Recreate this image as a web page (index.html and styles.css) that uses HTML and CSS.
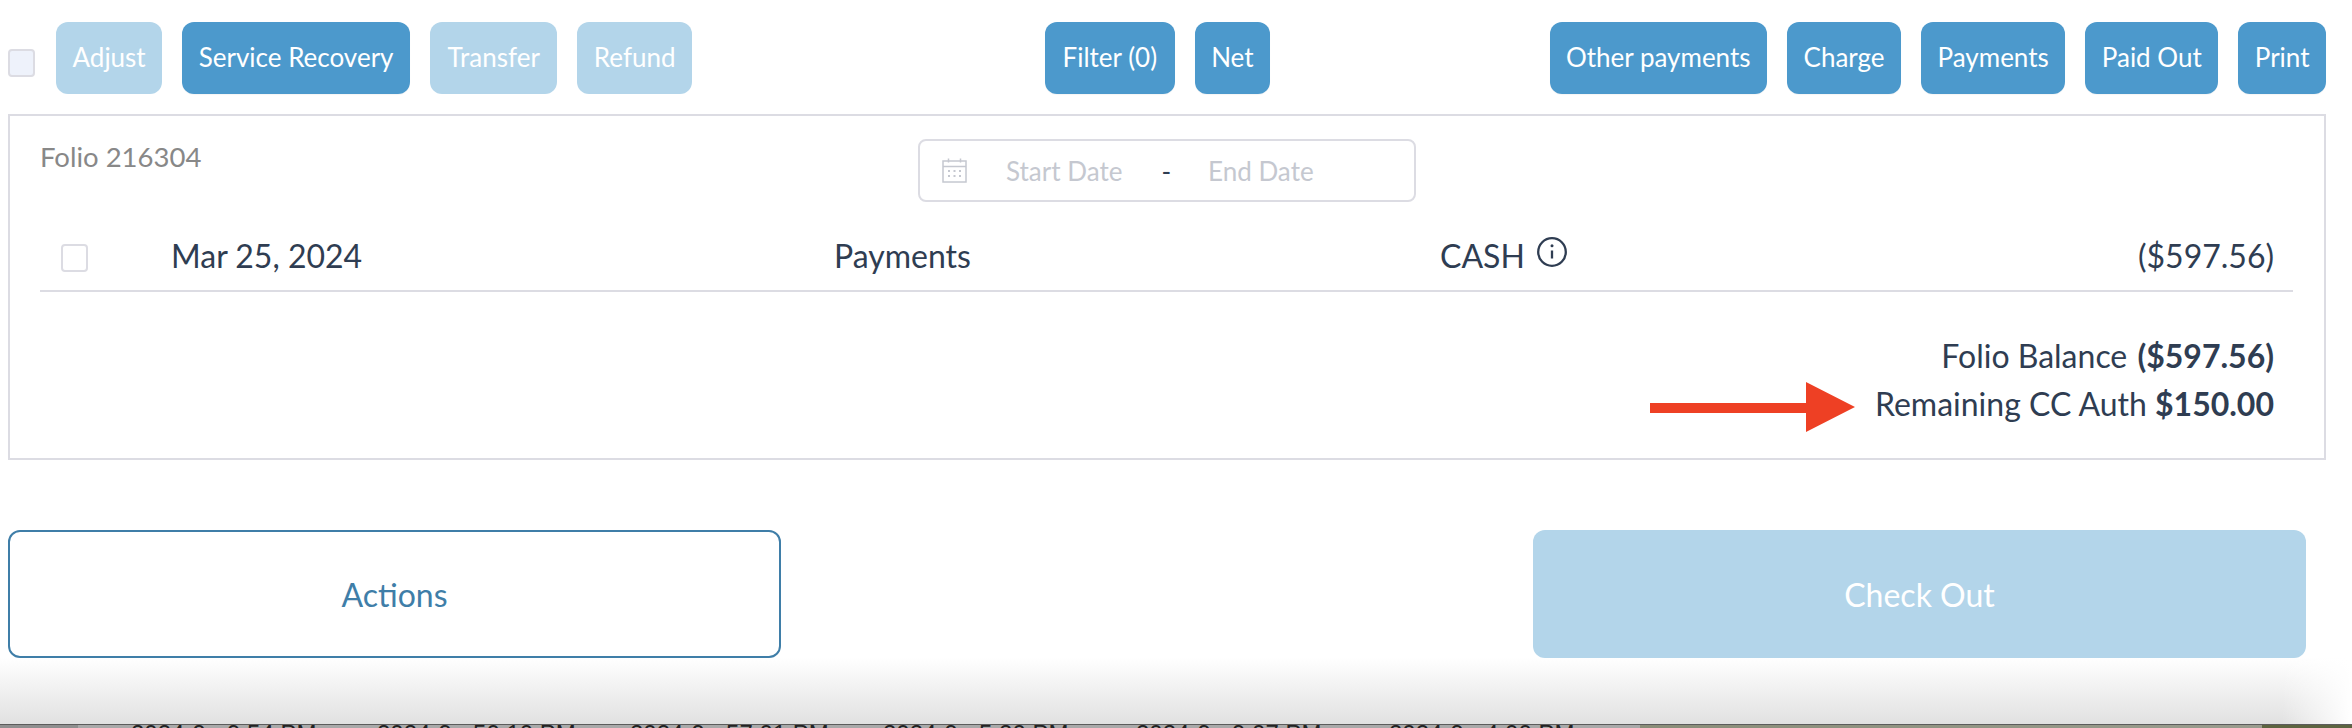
FILE: index.html
```html
<!DOCTYPE html>
<html lang="en">
<head>
<meta charset="utf-8">
<title>Folio</title>
<link rel="stylesheet" href="styles.css">
</head>
<body>
<div class="page">
  <div class="toolbar">
    <div class="group">
      <span class="check check-tinted"></span>
      <button class="btn btn-off">Adjust</button>
      <button class="btn">Service Recovery</button>
      <button class="btn btn-off btn-wide">Transfer</button>
      <button class="btn btn-off">Refund</button>
    </div>
    <div class="group group-center">
      <button class="btn btn-wide">Filter (0)</button>
      <button class="btn">Net</button>
    </div>
    <div class="group group-right">
      <button class="btn">Other payments</button>
      <button class="btn">Charge</button>
      <button class="btn">Payments</button>
      <button class="btn">Paid Out</button>
      <button class="btn">Print</button>
    </div>
  </div>

  <section class="panel">
    <div class="panel-head">
      <div class="folio">Folio 216304</div>
      <div class="dates">
        <svg class="cal" viewBox="0 0 25 25" fill="none" stroke="#c5c8d0" stroke-width="1.5">
          <rect x="1" y="3" width="23" height="21"/>
          <path d="M1 8.5h23M6.5 0.5v4M18.5 0.5v4"/>
          <path d="M6 13h2M11.5 13h2M17 13h2M6 18h2M11.5 18h2M17 18h2" stroke-width="2"/>
        </svg>
        <span class="date-ph date-start">Start Date</span>
        <span class="date-dash">-</span>
        <span class="date-ph">End Date</span>
      </div>
    </div>
    <div class="row">
      <span class="row-check"><span class="check"></span></span>
      <span>Mar 25, 2024</span>
      <span>Payments</span>
      <span class="cash">CASH
        <svg class="info" viewBox="0 0 30 30" fill="none" stroke="#2f3d52">
          <circle cx="15" cy="15" r="13.8" stroke-width="2.3"/>
          <path d="M15 13.5v8" stroke-width="2.3"/>
          <circle cx="15" cy="8.8" r="1.5" fill="#2f3d52" stroke="none"/>
        </svg>
      </span>
      <span class="amount">($597.56)</span>
    </div>
    <div class="summary">
      <div class="sum-line">Folio Balance <b class="sum-gap">($597.56)</b></div>
      <div class="sum-line">Remaining CC Auth <b>$150.00</b></div>
    </div>
    <svg class="arrow" viewBox="0 0 205 50"><path d="M0 21h156V0l49 25-49 25V31H0z" fill="#ee4024"/></svg>
  </section>

  <div class="actions">
    <button class="big big-outline">Actions</button>
    <button class="big big-off">Check Out</button>
  </div>
</div>

<div class="fade"></div>
<div class="strip">
  <span class="stamp">2024-9-&nbsp;&nbsp;9:54 PM</span>
  <span class="stamp">2024-9-&nbsp;&nbsp;50:10 PM</span>
  <span class="stamp">2024-9-&nbsp;&nbsp;57:01 PM</span>
  <span class="stamp">2024-9-&nbsp;&nbsp;5:20 PM</span>
  <span class="stamp">2024-9-&nbsp;&nbsp;9:07 PM</span>
  <span class="stamp">2024-9-&nbsp;&nbsp;4:00 PM</span>
</div>
</body>
</html>
```
FILE: styles.css
```css
* { box-sizing: border-box; }
html, body { margin: 0; height: 728px; overflow: hidden; background: #fff; }
body { display: flex; flex-direction: column; font-family: Lato, "Liberation Sans", sans-serif; color: #2f3d52; }

.page { height: 658px; padding: 22px 26px 0 8px; flex: none; }

.toolbar { display: flex; align-items: center; height: 72px; }
.group { display: flex; align-items: center; gap: 20px; }
.group-center { margin-left: 353px; }
.group-right { margin-left: auto; }

.btn {
  height: 72px;
  padding: 0 16.5px 3px;
  border: 0;
  border-radius: 12px;
  background: #4c99cc;
  color: #fff;
  font: 400 26px Lato, sans-serif;
  box-shadow: 0 1px 1px rgba(0, 0, 0, 0.04);
}
.btn-off { background: #b3d5ea; box-shadow: none; }
.btn-wide { padding-left: 17.5px; padding-right: 17.5px; }

.check {
  display: block;
  width: 27px;
  height: 28px;
  border: 2px solid #dcdce3;
  border-radius: 4px;
  background: #fff;
}
.check-tinted { background: #eef2fb; margin-top: 9px; margin-right: 1px; }

.panel {
  position: relative;
  height: 346px;
  margin-top: 20px;
  padding: 23px 31px 0 30px;
  border: 2px solid #dcdce3;
}
.panel-head { display: flex; align-items: flex-start; height: 63px; }
.folio { width: 878px; font-size: 27.5px; line-height: 28px; margin-top: 4px; color: #888; }
.dates {
  display: flex;
  align-items: center;
  width: 498px;
  height: 63px;
  padding-left: 22px;
  border: 2px solid #dcdce3;
  border-radius: 8px;
  font-size: 26px;
}
.cal { width: 25px; height: 25px; flex: none; }
.date-ph { color: #c5c8d0; }
.date-start { margin-left: 39px; }
.date-dash { margin: 0 37px 0 39px; color: #2f3d52; }

.row {
  display: grid;
  grid-template-columns: 131px 663px 606px 200px 1fr;
  align-items: center;
  height: 90px;
  padding-top: 19px;
  padding-right: 19px;
  border-bottom: 2px solid #dcdce3;
  font-size: 32px;
}
.row-check { padding-left: 21px; padding-top: 4px; }
.cash { display: flex; align-items: center; gap: 12px; }
.info { width: 30px; height: 30px; margin-top: -7px; }
.amount { text-align: right; }

.summary { padding: 40px 19px 0 0; text-align: right; font-size: 32px; }
.sum-line { line-height: 48px; }
.sum-gap { margin-left: 2px; }
.summary b { font-weight: 700; }

.arrow { position: absolute; left: 1640px; top: 266px; width: 205px; height: 50px; }

.actions { display: flex; justify-content: space-between; margin-top: 70px; padding-right: 20px; }
.big {
  width: 773px;
  height: 128px;
  border-radius: 12px;
  font: 400 32px Lato, sans-serif;
}
.big-outline { background: #fff; border: 2px solid #3f7ea8; color: #3f7ea8; }
.big-off { background: #b3d5ea; border: 0; color: #fff; }

.fade {
  flex: none;
  height: 66px;
  background:
    linear-gradient(to left, #fff, rgba(255, 255, 255, 0) 70px),
    linear-gradient(to bottom, #fff, #e1e1e1);
}
.strip {
  flex: none;
  display: grid;
  grid-template-columns: 246px repeat(5, 253px);
  height: 4px;
  padding-left: 131px;
  overflow: hidden;
  border-top: 1px solid #5c5c5c;
  background: linear-gradient(to right, #8f8f8f 78px, #a9a9a9 78px, #a9a9a9 1640px, #8a8d78 1640px, #9a9c8e 2262px, #5d6440 2262px);
  font: 24px/24px "Liberation Sans", sans-serif;
  color: #222;
  white-space: nowrap;
}
.stamp { display: block; margin-top: -3px; }
```
